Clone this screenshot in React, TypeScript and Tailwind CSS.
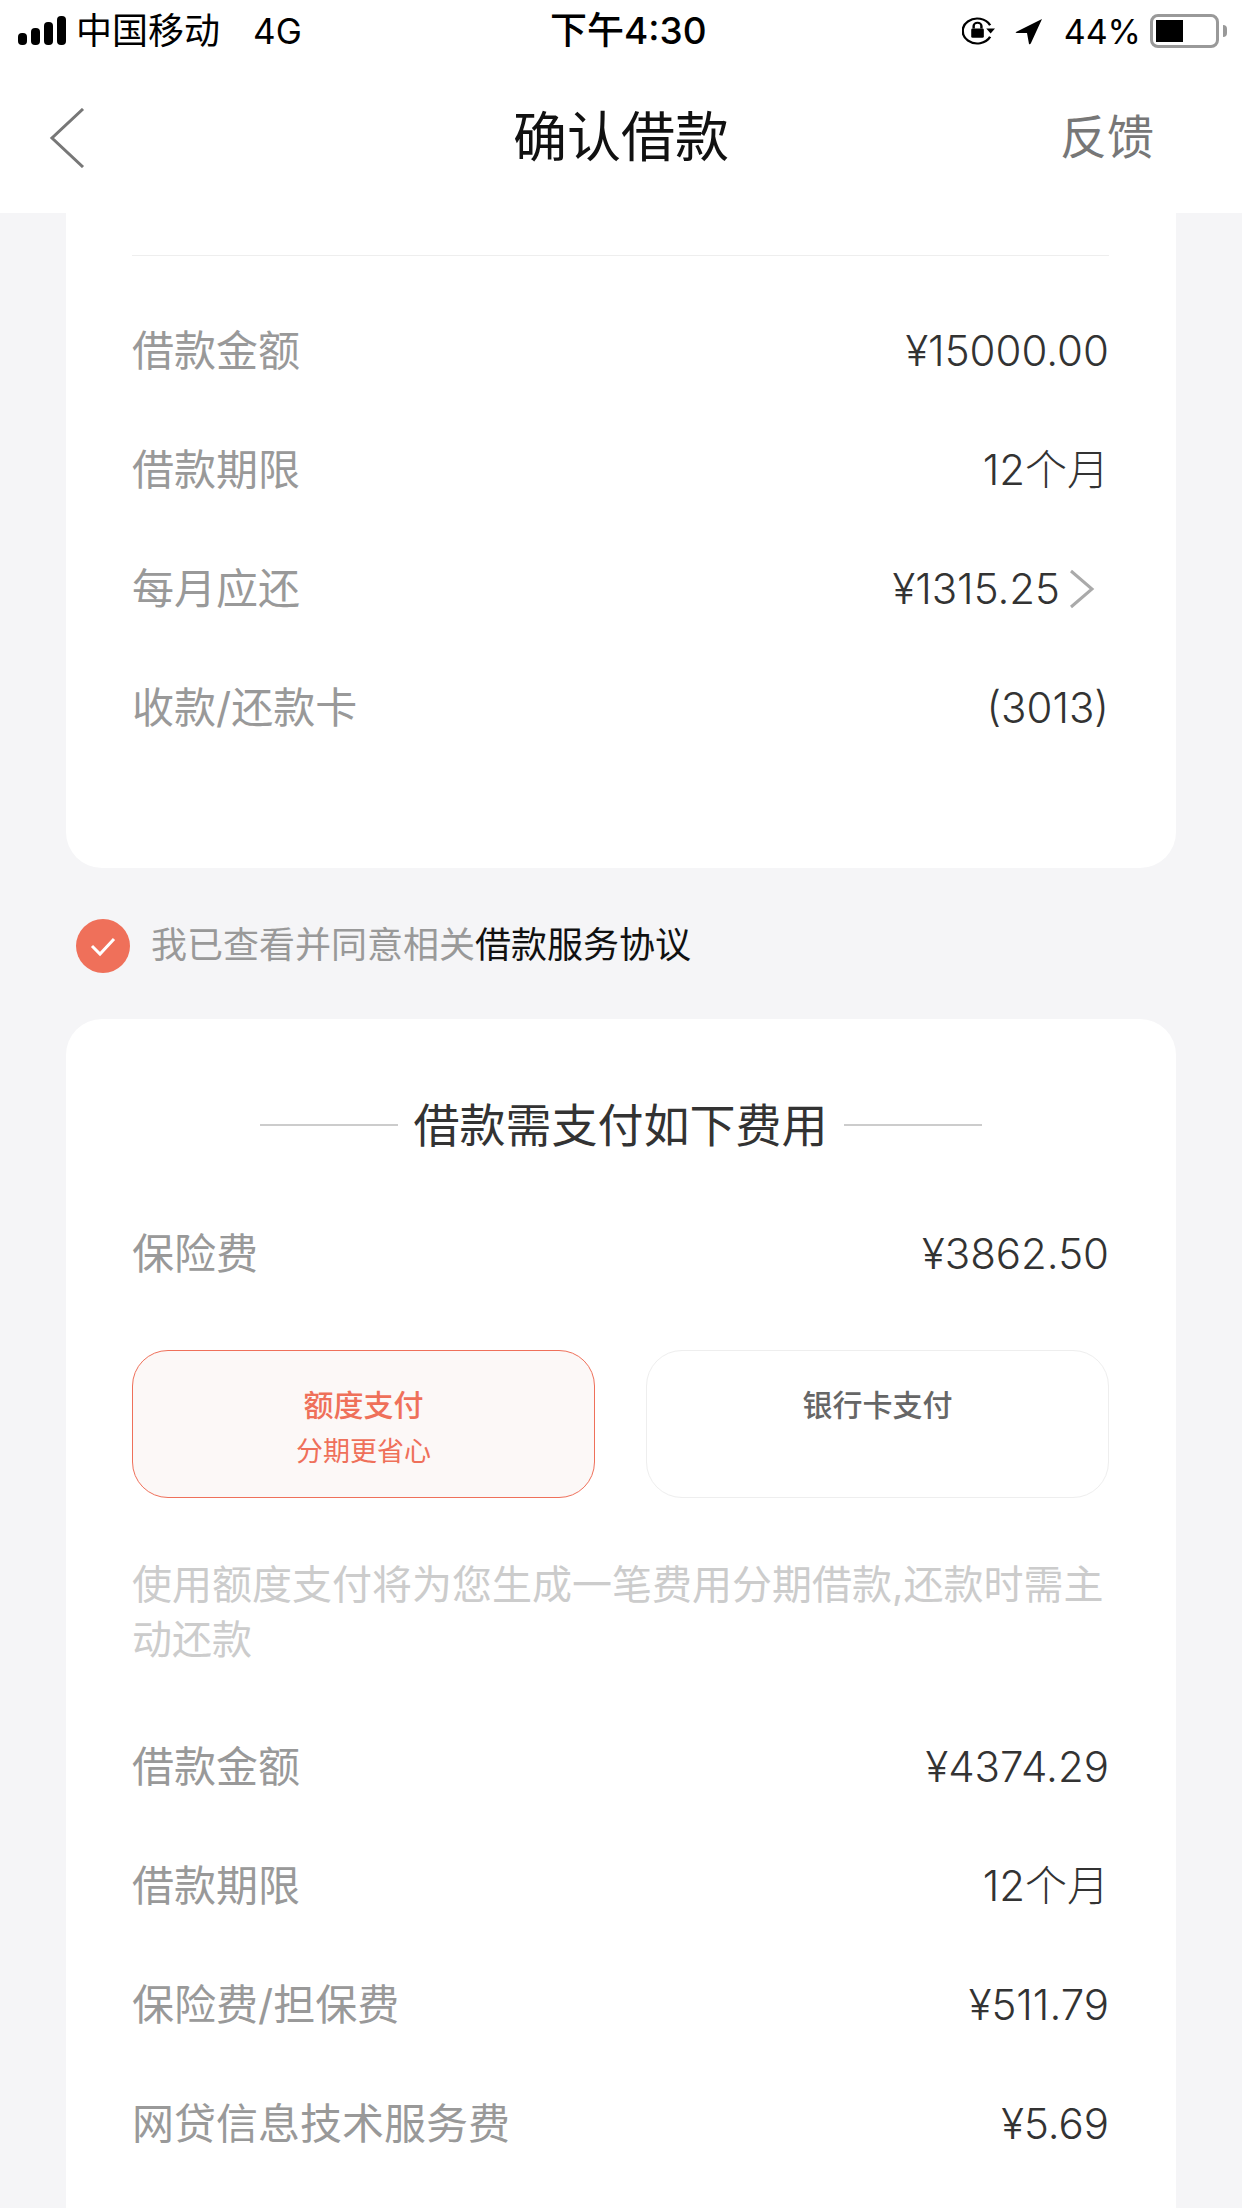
const font = "font-['Inter','Noto_Sans_CJK_SC',sans-serif]";

function InfoRow({ label, value, arrow }: { label: string; value: string; arrow?: boolean }) {
  return (
    <div className="flex h-[119px] items-center justify-between">
      <span className="text-[42px] text-[#999999]">{label}</span>
      <span className="flex items-center text-[42px] font-light text-[#333333]">
        {value}
        {arrow && (
          <svg width="49" height="40" viewBox="0 0 49 40" fill="none" stroke="#aaaaaa" strokeWidth="3">
            <path d="M11 2l21 18-21 18" />
          </svg>
        )}
      </span>
    </div>
  );
}

function StatusBar() {
  return (
    <div className="flex h-[62px] items-center pl-[18px] pr-[15px] text-[35px] text-black">
      <div className="flex w-[532px] items-center">
        <svg width="48" height="30" viewBox="0 0 48 30" fill="#000000">
          <rect x="0" y="17" width="9" height="12" rx="4" />
          <rect x="13" y="12" width="9" height="17" rx="4" />
          <rect x="26" y="6" width="9" height="23" rx="4" />
          <rect x="39" y="0" width="9" height="29" rx="4" />
        </svg>
        <span className="ml-[10px] text-[36px]">中国移动</span>
        <span className="ml-[33px]">4G</span>
      </div>
      <div className="text-[37px] font-medium">下午4:30</div>
      <div className="flex flex-1 items-center justify-end">
        <svg width="33" height="30" viewBox="0 0 34 36" preserveAspectRatio="none" fill="none">
          <path d="M29 11A15 15 0 1 0 29 25" stroke="#000000" strokeWidth="2.500" />
          <path d="M25 15h9l-4.500 6z" fill="#000000" />
          <rect x="9.500" y="15" width="13" height="11" rx="1.500" fill="#000000" />
          <path d="M12 15v-3a4 4 0 0 1 8 0v3" stroke="#000000" strokeWidth="2.500" />
        </svg>
        <svg className="ml-[20px]" width="28" height="27" viewBox="0 0 28 27" fill="#000000">
          <path d="M27 1L1 14q-1 1 1 1h10l2 11q1 1 2-1z" />
        </svg>
        <span className="ml-[21px] text-[34px]">44%</span>
        <div className="ml-[9px] h-[34px] w-[69px] rounded-[8px] border-[3px] border-[#999999] p-[3px]">
          <div className="h-full w-[27px] bg-black" />
        </div>
        <div className="ml-[4px] h-[12px] w-[4px] rounded-r-full bg-[#999999]" />
      </div>
    </div>
  );
}

export default function App() {
  return (
    <div className={`h-[2208px] w-[1242px] overflow-hidden bg-[#f5f5f7] ${font}`}>
      <header className="h-[213px] bg-white">
        <StatusBar />
        <div className="grid h-[151px] grid-cols-3 items-center px-[88px]">
          <svg className="-ml-[39px]" width="36" height="60" viewBox="0 0 36 60" fill="none" stroke="#777777" strokeWidth="3">
            <path d="M34 1L3 30l31 29" />
          </svg>
          <span className="text-center text-[54px] text-[#111111]">确认借款</span>
          <span className="text-right text-[47px] text-[#777777]">反馈</span>
        </div>
      </header>

      <main className="px-[66px]">
        {/* Loan summary card, scrolled under the nav */}
        <section className="rounded-b-[36px] bg-white pb-[101px] pl-[66px] pr-[67px] pt-[42px]">
          <div className="mb-[35px] h-px bg-[#eeeeee]" />
          <InfoRow label="借款金额" value="¥15000.00" />
          <InfoRow label="借款期限" value="12个月" />
          <InfoRow label="每月应还" value="¥1315.25" arrow />
          <InfoRow label="收款/还款卡" value="(3013)" />
        </section>

        {/* Agreement */}
        <div className="flex h-[151px] items-center pl-[10px] pt-[5px]">
          <svg width="54" height="54" viewBox="0 0 54 54">
            <circle cx="27" cy="27" r="27" fill="#ef705a" />
            <path d="M16 27l8 8 14-15" fill="none" stroke="#ffffff" strokeWidth="3" />
          </svg>
          <p className="mb-[3px] ml-[21px] text-[36px] text-[#999999]">
            我已查看并同意相关<span className="text-[#111111]">借款服务协议</span>
          </p>
        </div>

        {/* Fee card */}
        <section className="rounded-t-[36px] bg-white pb-[100px] pl-[66px] pr-[67px] pt-[76px]">
          <div className="flex h-[60px] items-center justify-center">
            <div className="h-[2px] w-[138px] bg-[#cccccc]" />
            <h2 className="mx-[16px] text-[46px] text-[#333333]">借款需支付如下费用</h2>
            <div className="h-[2px] w-[138px] bg-[#cccccc]" />
          </div>
          <div className="mt-[39px]">
            <InfoRow label="保险费" value="¥3862.50" />
          </div>
          <div className="mt-[37px] grid grid-cols-2 gap-[51px]">
            <div className="flex h-[148px] flex-col items-center rounded-[36px] border border-[#ef705a] bg-[#fcf8f7] pt-[34px]">
              <span className="text-[30px] leading-[40px] font-medium text-[#ef705a]">额度支付</span>
              <span className="mt-[7px] text-[27px] leading-[40px] text-[#ef705a]">分期更省心</span>
            </div>
            <div className="flex h-[148px] flex-col items-center rounded-[36px] border border-[#eeeeee] bg-white pt-[34px]">
              <span className="text-[30px] leading-[40px] font-medium text-[#666666]">银行卡支付</span>
            </div>
          </div>
          <p className="mt-[59px] text-[40px] leading-[55px] text-[#cccccc]">
            使用额度支付将为您生成一笔费用分期借款,还款时需主动还款
          </p>
          <div className="mt-[40px]">
            <InfoRow label="借款金额" value="¥4374.29" />
            <InfoRow label="借款期限" value="12个月" />
            <InfoRow label="保险费/担保费" value="¥511.79" />
            <InfoRow label="网贷信息技术服务费" value="¥5.69" />
          </div>
        </section>
      </main>
    </div>
  );
}
